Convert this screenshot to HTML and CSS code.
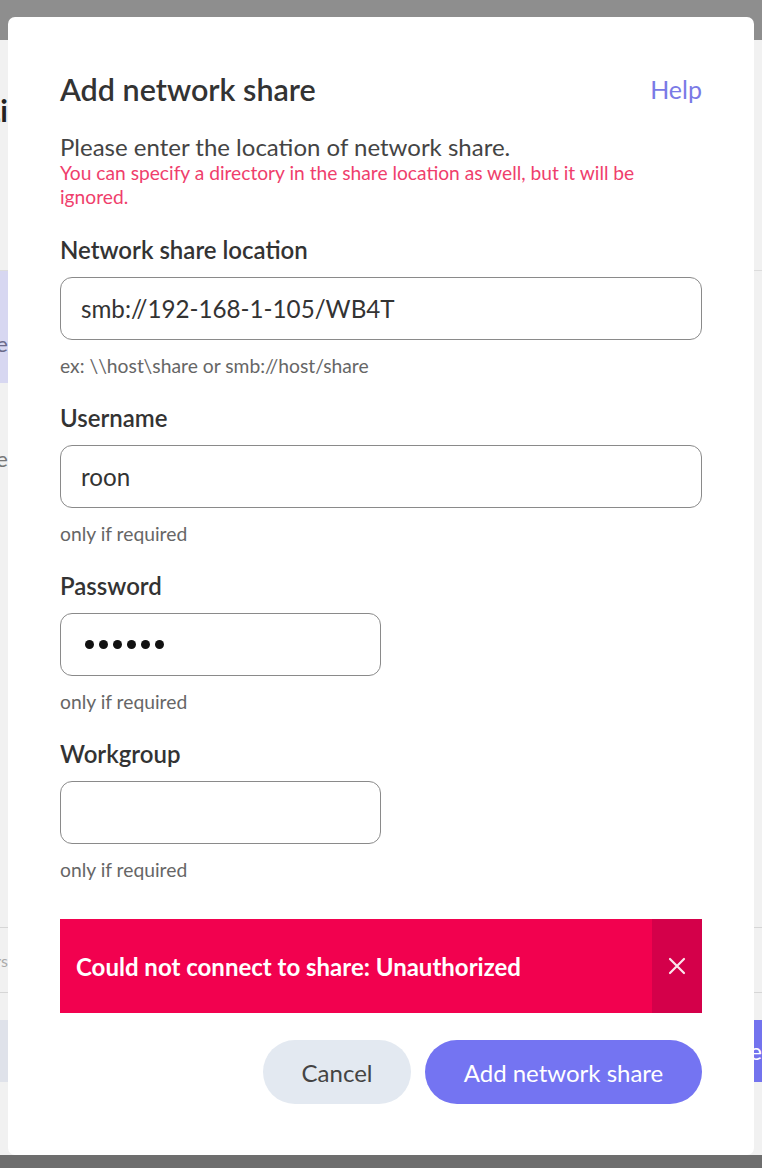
FILE: index.html
```html
<!DOCTYPE html>
<html lang="en">
<head>
<meta charset="utf-8">
<title>Add network share</title>
<link rel="stylesheet" href="styles.css">
</head>
<body>
<div class="page">
  <div class="page-header"></div>
  <div class="page-body">
    <div class="page-title"><span>Storage locations and folders: Music Li</span></div>
    <div class="page-row page-row-active"><span class="row-end">Storage</span></div>
    <div class="page-row page-row-tall"><span class="row-end">Share</span></div>
    <div class="page-spacer"></div>
    <div class="page-row page-row-lines"><span class="row-end">Folders</span></div>
    <div class="page-actions"><span class="act-left"></span><span class="act-right">Share</span></div>
  </div>
  <div class="page-footer"></div>
</div>

<div class="modal" role="dialog" aria-labelledby="modal-title">
  <div class="modal-head">
    <h1 id="modal-title" class="modal-title">Add network share</h1>
    <a class="help-link" href="#">Help</a>
  </div>
  <p class="intro">Please enter the location of network share.</p>
  <p class="warn">You can specify a directory in the share location as well, but it will be ignored.</p>

  <div class="field">
    <label class="field-label" for="loc">Network share location</label>
    <input id="loc" class="field-input" type="text" value="smb://192-168-1-105/WB4T">
    <div class="field-hint">ex: \\host\share or smb://host/share</div>
  </div>

  <div class="field">
    <label class="field-label" for="user">Username</label>
    <input id="user" class="field-input" type="text" value="roon">
    <div class="field-hint">only if required</div>
  </div>

  <div class="field">
    <label class="field-label" for="pass">Password</label>
    <div id="pass" class="field-input field-input-short pw"><span class="dot"></span><span class="dot"></span><span class="dot"></span><span class="dot"></span><span class="dot"></span><span class="dot"></span></div>
    <div class="field-hint">only if required</div>
  </div>

  <div class="field">
    <label class="field-label" for="wg">Workgroup</label>
    <input id="wg" class="field-input field-input-short" type="text" value="">
    <div class="field-hint">only if required</div>
  </div>

  <div class="error">
    <div class="error-text">Could not connect to share: Unauthorized</div>
    <button class="error-close" aria-label="Dismiss">
      <svg width="18" height="18" viewBox="0 0 18 18"><path d="M2 2 L16 16 M16 2 L2 16" stroke="#fff" stroke-opacity="0.9" stroke-width="2.2" stroke-linecap="round" fill="none"/></svg>
    </button>
  </div>

  <div class="actions">
    <button class="btn btn-cancel">Cancel</button>
    <button class="btn btn-primary">Add network share</button>
  </div>
</div>
</body>
</html>
```

FILE: styles.css
```css
html, body {
  margin: 0;
  padding: 0;
  height: 100%;
}
body {
  font-family: Lato, "Open Sans", "Noto Sans", sans-serif;
  background: #f0f0f0;
  overflow: hidden;
}

/* backdrop page */
.page {
  height: 1168px;
  display: flex;
  flex-direction: column;
  background: #f1f1f1;
}
.page-header {
  height: 40px;
  background: #8e8e8e;
  flex: none;
}
.page-body {
  flex: 1;
  display: flex;
  flex-direction: column;
}
.page-title {
  margin-top: 52px;
  height: 36px;
  width: 8px;
  display: flex;
  justify-content: flex-end;
  overflow: hidden;
  white-space: nowrap;
  font-size: 30px;
  font-weight: 700;
  line-height: 36px;
  color: #222;
}
.page-row {
  box-sizing: border-box;
  display: flex;
  align-items: center;
  font-size: 22px;
  color: #777;
}
.row-end {
  width: 8px;
  display: flex;
  justify-content: flex-end;
  overflow: hidden;
  white-space: nowrap;
}
.page-row-active {
  margin-top: 142px;
  height: 113px;
  padding-top: 32px;
  border-top: 1px solid #dcdcdc;
  background: linear-gradient(to right, #d7d7f1 0 8px, #f1f1f1 8px);
  color: #6a6a8a;
}
.page-row-tall {
  height: 150px;
}
.page-spacer {
  height: 394px;
}
.page-row-lines {
  height: 66px;
  border-top: 1px solid #d6d6d6;
  border-bottom: 1px solid #d6d6d6;
  font-size: 16px;
  color: #aaa;
}
.page-actions {
  margin-top: 27px;
  height: 62px;
  display: flex;
  justify-content: space-between;
}
.act-left {
  width: 8px;
  background: #dfe2ea;
}
.act-right {
  width: 8px;
  background: #7373ee;
  color: #fff;
  font-size: 24px;
  line-height: 62px;
  overflow: hidden;
  display: flex;
  justify-content: flex-end;
}
.page-footer {
  height: 13px;
  background: #6e6e6e;
  flex: none;
}

/* modal */
.modal {
  position: fixed;
  left: 8px;
  top: 17px;
  width: 746px;
  height: 1138px;
  box-sizing: border-box;
  background: #fff;
  border-radius: 7px;
  padding: 54px 52px 0;
  display: flex;
  flex-direction: column;
}
.modal-head {
  display: flex;
  justify-content: space-between;
  align-items: center;
  height: 36px;
}
.modal-title {
  margin: 0;
  font-size: 30.5px;
  font-weight: 600;
  color: #333;
  line-height: 36px;
}
.help-link {
  font-size: 25px;
  color: #7a7ae6;
  text-decoration: none;
  line-height: 36px;
}
.intro {
  margin: 26px 0 0;
  font-size: 24px;
  line-height: 28px;
  color: #444;
}
.warn {
  margin: 0;
  font-size: 19.2px;
  line-height: 24px;
  color: #ef3e6c;
}
.field {
  margin-top: 27px;
  display: flex;
  flex-direction: column;
  align-items: flex-start;
}
.field-label {
  font-size: 24px;
  font-weight: 600;
  line-height: 28px;
  color: #333;
}
.field-input {
  margin-top: 13px;
  box-sizing: border-box;
  width: 642px;
  height: 63px;
  border: 1.5px solid #8a8a8a;
  border-radius: 12px;
  padding: 0 20px;
  font-family: Lato, "Open Sans", sans-serif;
  font-size: 24.2px;
  color: #333;
  background: #fff;
  outline: none;
}
.field-input-short {
  width: 321px;
}
.pw {
  display: flex;
  align-items: center;
  gap: 5px;
  padding-left: 24px;
}
.dot {
  width: 9px;
  height: 9px;
  border-radius: 50%;
  background: #111;
}
.field-hint {
  margin-top: 15px;
  font-size: 19.3px;
  line-height: 22px;
  color: #666;
}
.error {
  margin-top: 38px;
  height: 94px;
  display: flex;
  background: #f2014f;
}
.error-text {
  flex: 1;
  display: flex;
  align-items: center;
  padding-left: 16px;
  font-size: 24px;
  font-weight: 700;
  color: #fff;
}
.error-close {
  width: 50px;
  border: 0;
  padding: 0;
  background: #d4004a;
  display: flex;
  align-items: center;
  justify-content: center;
  cursor: pointer;
}
.actions {
  margin-top: 27px;
  display: flex;
  justify-content: flex-end;
  gap: 14px;
}
.btn {
  height: 64px;
  border: 0;
  border-radius: 32px;
  font-family: Lato, "Open Sans", sans-serif;
  font-size: 24px;
  cursor: pointer;
}
.btn-cancel {
  width: 148px;
  background: #e3e9f1;
  color: #444;
}
.btn-primary {
  width: 277px;
  background: #7474f2;
  color: #fff;
}
```
